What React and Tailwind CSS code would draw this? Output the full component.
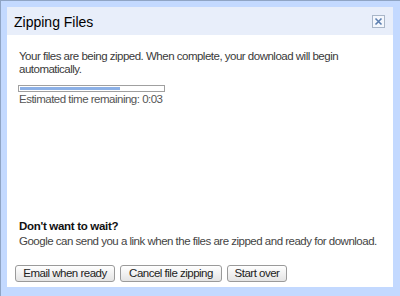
export default function App() {
  const btn =
    "h-[17px] px-[4px] rounded-[3px] border border-[#9a9a9a] bg-gradient-to-b from-[#ffffff] to-[#e4e4e4] text-[11.5px] tracking-[-0.5px] leading-[15px] text-[#222] flex items-center justify-center whitespace-nowrap";
  return (
    <div
      className="w-[400px] h-[296px] bg-[#c3d9ff] border-t border-l border-[#8fa4c4] pt-[6px] pl-[6px] pr-[7px] pb-[9px] flex"
      style={{ fontFamily: '"Liberation Sans", Arial, sans-serif' }}
    >
      <div className="flex-1 bg-white flex flex-col">
        <div className="h-[28px] bg-[#e8eefa] flex items-center justify-between pl-[7px] pr-[8px]">
          <span className="text-[14px] text-black leading-none mt-[2px]">Zipping Files</span>
          <div className="w-[13px] h-[13px] border border-[#a9b6c8] bg-[#f4f7fd] flex items-center justify-center mt-[1px]">
            <svg width="9" height="9" viewBox="0 0 9 9">
              <path d="M1.5 1.5 L7.5 7.5 M7.5 1.5 L1.5 7.5" stroke="#5c7fb0" strokeWidth="1.6" />
            </svg>
          </div>
        </div>
        <div className="flex-1 flex flex-col pl-[12px] pr-[8px] pt-[15px] pb-[5px] text-[11.5px] tracking-[-0.5px] leading-[13px] text-[#3a3a3a]">
          <p>Your files are being zipped. When complete, your download will begin<br />automatically.</p>
          <div className="mt-[9px] w-[147px] h-[7px] border border-[#a0a0a0] p-[1px] -ml-[1px]">
            <div className="h-full w-[100px] bg-[#8cb0e6]" />
          </div>
          <p className="mt-[1px] text-[#555]">Estimated time remaining: 0:03</p>
          <div className="flex-1" />
          <p className="font-bold text-[#111] text-[11.5px] tracking-[-0.3px]">Don't want to wait?</p>
          <p className="mt-[2px] text-[#444] whitespace-nowrap">Google can send you a link when the files are zipped and ready for download.</p>
          <div className="flex gap-[5px] mt-[17px] -ml-[4px]">
            <button className={btn + " w-[100px]"}>Email when ready</button>
            <button className={btn + " w-[102px]"}>Cancel file zipping</button>
            <button className={btn + " w-[60px] border-[#6b7f9e]"}>Start over</button>
          </div>
        </div>
      </div>
    </div>
  );
}
